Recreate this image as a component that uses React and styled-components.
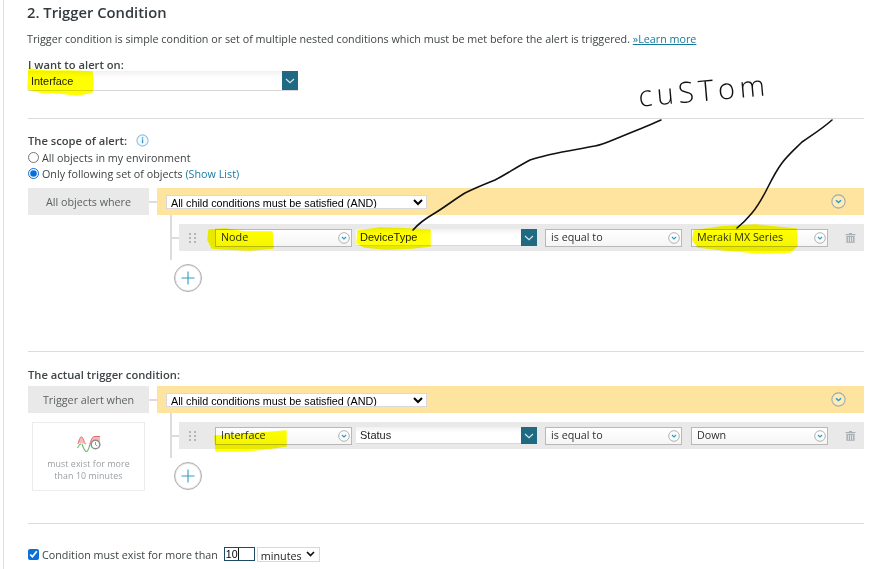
import React from "react";
import styled, { createGlobalStyle } from "styled-components";

const GlobalStyle = createGlobalStyle`
  html, body {
    margin: 0;
    padding: 0;
    background: #fff;
    overflow: hidden;
  }
  * {
    box-sizing: border-box;
  }
`;

function ChevronCircle({ size = 14 }) {
  return (
    <svg width={size} height={size} viewBox="0 0 14 14">
      <circle cx="7" cy="7" r="6.2" fill="#fff" fillOpacity="0.25" stroke="#a3a8a8" strokeWidth="1" />
      <path d="M4.6 5.8 L7 8 L9.4 5.8" fill="none" stroke="#2f9cc4" strokeWidth="1.4" />
    </svg>
  );
}

function WhiteChevron() {
  return (
    <svg width="10" height="6" viewBox="0 0 10 6">
      <path d="M1 1 L5 4.6 L9 1" fill="none" stroke="#d5e6ec" strokeWidth="1.2" />
    </svg>
  );
}

function BlackChevron() {
  return (
    <svg width="9" height="6" viewBox="0 0 9 6">
      <path d="M1 1 L4.5 4.5 L8 1" fill="none" stroke="#111" strokeWidth="1.7" />
    </svg>
  );
}

function InfoIcon() {
  return (
    <svg width="13" height="13" viewBox="0 0 13 13">
      <circle cx="6.5" cy="6.5" r="5.6" fill="#f2f9fd" stroke="#8cc4e4" strokeWidth="1.1" />
      <rect x="5.9" y="5.4" width="1.3" height="3.8" fill="#3d8fc4" />
      <rect x="5.9" y="3.3" width="1.3" height="1.3" fill="#3d8fc4" />
    </svg>
  );
}

function TrashIcon() {
  return (
    <svg width="11" height="11" viewBox="0 0 11 11">
      <path d="M4 1 H7 V2 H10.4 V3.2 H0.6 V2 H4 Z" fill="#a8b0b3" />
      <path d="M1.4 4 H9.6 V10.8 H1.4 Z" fill="#a8b0b3" />
      <path d="M3.4 5 V9.8 M5.5 5 V9.8 M7.6 5 V9.8" stroke="#e9e9e9" strokeWidth="0.9" />
    </svg>
  );
}

function PlusIcon() {
  return (
    <svg width="14" height="14" viewBox="0 0 14 14">
      <path d="M7 0.5 V13.5 M0.5 7 H13.5" stroke="#2f9cc4" strokeWidth="1.1" />
    </svg>
  );
}

function GripIcon() {
  return (
    <svg width="7" height="10" viewBox="0 0 7 10">
      {[0, 4, 8].map((y) => (
        <g key={y} fill="#b5b5b5">
          <rect x="0" y={y} width="2" height="2" />
          <rect x="5" y={y} width="2" height="2" />
        </g>
      ))}
    </svg>
  );
}

function WaveIcon() {
  return (
    <svg width="24" height="18" viewBox="0 0 24 18">
      <path d="M1 8 C3 2 4 1 5.5 3 C7 5 7.5 9 9 9 L13 9 C14 5 15 1.500 18 1.500 L23 1.500 L23 9 L13 9 Z" fill="#f7b9b9" />
      <path d="M1 9 C2.500 3 4 0.500 5.500 2.500 C7 5 7.500 9 9 9" fill="none" stroke="#e2686c" strokeWidth="1" />
      <path d="M13 9 C14 5 15 1.500 18 1.500 L23 1.500" fill="none" stroke="#e2686c" strokeWidth="1" />
      <path d="M0.500 13 C2 10 3 9 4 9 M5 9 C6 12 7.500 16.500 9.500 16.500 C11.500 16.500 12 12 13 9" fill="none" stroke="#6cb86a" strokeWidth="1.100" />
      <circle cx="18.500" cy="9.500" r="4.300" fill="#fff" stroke="#8b8f92" strokeWidth="1.500" />
      <path d="M18.500 7 V9.800 L20.300 11" fill="none" stroke="#8b8f92" strokeWidth="0.900" />
    </svg>
  );
}

function Annotations() {
  return (
    <>
      <HighlightLayer viewBox="0 0 869 569" width="869" height="569">
        <path d="M29 69 L45 71 L70 71 L92 72 L93 84 L92 92 L78 95 L60 93 L40 92 L28 89 Z" />
        <path d="M209 230 L225 229 L245 232 L272 232 L273 248 L250 250 L225 249 L212 248 L208 240 Z" />
        <path d="M358 231 L380 228 L410 229 L430 230 L430 246 L412 248 L385 249 L365 247 L357 243 Z" />
        <path d="M694 231 L720 227 L755 225 L796 229 L797 246 L790 252 L760 253 L725 250 L698 247 L693 240 Z" />
        <path d="M215 436 L240 435 L262 433 L286 431 L286 446 L265 449 L240 451 L216 451 Z" />
      </HighlightLayer>
      <ScribbleLayer viewBox="0 0 869 569" width="869" height="569">
        <path d="M661 120 C650 125 640 129 625 135 C612 140 605 144 595 146 C575 150 550 153 530 160 C515 168 505 175 495 180 C485 184 475 188 465 193 C455 199 445 207 435 213 C428 217 420 222 413 230" />
        <path d="M832 120 C822 129 812 135 802 142 C795 149 788 155 782 163 C776 171 772 179 768 187 C764 195 758 206 752 213 C747 219 742 224 737 228" />
      </ScribbleLayer>
      <HandNote>cuSTom</HandNote>
    </>
  );
}

function Dropdown({ width, gap, children }) {
  return (
    <Select $width={width} $gap={gap}>
      <SelectText>{children}</SelectText>
      <ChevronCircle size={12} />
    </Select>
  );
}

function LookupField({ children }) {
  return (
    <Lookup>
      <LookupText>{children}</LookupText>
      <LookupButton>
        <WhiteChevron />
      </LookupButton>
    </Lookup>
  );
}

function ConditionRow({ source, field, value }) {
  return (
    <Tree>
      <Connector $width={7} />
      <Row>
        <Grip>
          <GripIcon />
        </Grip>
        <Dropdown width={137}>{source}</Dropdown>
        <LookupField>{field}</LookupField>
        <Dropdown width={137} gap={8}>is equal to</Dropdown>
        <Dropdown width={137} gap={9}>{value}</Dropdown>
        <Trash>
          <TrashIcon />
        </Trash>
      </Row>
    </Tree>
  );
}

function ConditionGroup({ label, side, source, field, value }) {
  return (
    <div>
      <GroupHead>
        <GroupLabel>{label}</GroupLabel>
        <Connector $width={8} />
        <GroupBar>
          <AndSelect defaultValue="and">
            <option value="and">All child conditions must be satisfied (AND)</option>
          </AndSelect>
          <BarToggle>
            <ChevronCircle size={15} />
          </BarToggle>
        </GroupBar>
      </GroupHead>
      <GroupBody>
        <Side>{side}</Side>
        <TreeColumn>
          <ConditionRow source={source} field={field} value={value} />
          <AddButton>
            <PlusIcon />
          </AddButton>
        </TreeColumn>
      </GroupBody>
    </div>
  );
}

export default function App() {
  return (
    <Page>
      <GlobalStyle />
      <Title>2. Trigger Condition</Title>
      <Description>
        Trigger condition is simple condition or set of multiple nested conditions which must be met before the alert is triggered. <Link $underline>»Learn more</Link>
      </Description>
      <FieldLabel>I want to alert on:</FieldLabel>
      <LookupWide>
        <LookupTextWide>Interface</LookupTextWide>
        <LookupButton>
          <WhiteChevron />
        </LookupButton>
      </LookupWide>
      <Divider $top={27} />
      <ScopeLabel>
        The scope of alert:
        <InfoIcon />
      </ScopeLabel>
      <RadioLine>
        <input type="radio" name="scope" />
        All objects in my environment
      </RadioLine>
      <RadioLine>
        <input type="radio" name="scope" defaultChecked />
        <span>
          Only following set of objects <Link>(Show List)</Link>
        </span>
      </RadioLine>
      <GroupSpacer $top={7}>
        <ConditionGroup label="All objects where" source="Node" field="DeviceType" value="Meraki MX Series" />
      </GroupSpacer>
      <Divider $top={59} />
      <TriggerLabel>The actual trigger condition:</TriggerLabel>
      <GroupSpacer $top={3}>
        <ConditionGroup
          label="Trigger alert when"
          source="Interface"
          field="Status"
          value="Down"
          side={
            <SustainCard>
              <WaveIcon />
              <SustainText>
                must exist for more
                <br />
                than 10 minutes
              </SustainText>
            </SustainCard>
          }
        />
      </GroupSpacer>
      <Divider $top={32} />
      <SustainLine>
        <input type="checkbox" defaultChecked />
        <span>Condition must exist for more than</span>
        <MinutesInput defaultValue="10" />
        <UnitField>
          <UnitSelect defaultValue="minutes">
            <option value="minutes">minutes</option>
          </UnitSelect>
          <UnitArrow>
            <BlackChevron />
          </UnitArrow>
        </UnitField>
      </SustainLine>
      <Annotations />
    </Page>
  );
}

const Page = styled.div`
  position: relative;
  width: 869px;
  height: 569px;
  overflow: hidden;
  margin-left: 3px;
  padding: 0 8px 0 24px;
  border-left: 1px solid #dedede;
  font-family: "Open Sans", sans-serif;
  font-size: 10.76px;
  color: #3f4446;
  background: #fff;
`;

const Title = styled.div`
  height: 25px;
  line-height: 25px;
  margin-left: -1px;
  font-size: 14.75px;
  font-weight: 600;
  color: #333b3f;
`;

const Description = styled.div`
  height: 20px;
  margin: 4px 0 0 -1px;
  line-height: 20px;
  white-space: nowrap;
`;

const Link = styled.span`
  color: #167a9e;
  text-decoration: ${(p) => (p.$underline ? "underline" : "none")};
`;

const FieldLabel = styled.div`
  height: 13px;
  margin-top: 9px;
  line-height: 13px;
  font-size: 11.2px;
  font-weight: 600;
`;

const Lookup = styled.div`
  display: flex;
  width: 181px;
  height: 17px;
  margin-left: 4px;
  background: linear-gradient(#f1f1f1, #fff 35%);
`;

const LookupWide = styled(Lookup)`
  width: 270px;
  height: 20px;
  margin-left: 0;
  border-bottom: 1px solid #d8d8d8;
`;

const LookupText = styled.div`
  flex: 1;
  padding-left: 4px;
  line-height: 17px;
  font-family: "Liberation Sans", sans-serif;
  font-size: 11px;
  color: #222;
  border-bottom: 1px solid #d8d8d8;
`;

const LookupTextWide = styled(LookupText)`
  padding-left: 3px;
  line-height: 20px;
  font-size: 10.9px;
  border-bottom: none;
`;

const LookupButton = styled.div`
  display: flex;
  align-items: center;
  justify-content: center;
  width: 16px;
  background: #1f6a82;
`;

const Divider = styled.div`
  height: 1px;
  margin-top: ${(p) => p.$top}px;
  background: #dcdcdc;
`;

const ScopeLabel = styled.div`
  display: flex;
  align-items: center;
  gap: 9px;
  height: 16px;
  margin-top: 13px;
  font-size: 11.2px;
  font-weight: 600;
`;

const RadioLine = styled.label`
  display: flex;
  align-items: center;
  gap: 3px;
  height: 16px;
  white-space: nowrap;

  input {
    width: 11px;
    height: 11px;
    margin: 0;
    accent-color: #0b6fd6;
  }

  &:first-of-type {
    margin-top: 1px;
  }
`;

const GroupSpacer = styled.div`
  margin-top: ${(p) => p.$top}px;
`;

const GroupHead = styled.div`
  display: flex;
  align-items: center;
  height: 27px;
`;

const GroupLabel = styled.div`
  display: flex;
  align-items: center;
  justify-content: center;
  width: 121px;
  height: 27px;
  background: #e9e9e9;
  color: #5c6163;
`;

const Connector = styled.div`
  flex: none;
  width: ${(p) => p.$width}px;
  height: 2px;
  background: #dcdcdc;
`;

const GroupBar = styled.div`
  display: flex;
  align-items: center;
  justify-content: space-between;
  flex: 1;
  height: 27px;
  padding: 0 18px 0 9px;
  background: #fee49e;
`;

const AndSelect = styled.select`
  width: 261px;
  height: 14px;
  padding: 0;
  border: 1px solid #d9d9d9;
  background: #fff;
  font-family: "Liberation Sans", sans-serif;
  font-size: 10.8px;
  color: #000;
`;

const BarToggle = styled.div`
  display: flex;
`;

const GroupBody = styled.div`
  display: flex;
`;

const Side = styled.div`
  flex: none;
  width: 142px;
`;

const TreeColumn = styled.div`
  flex: 1;
`;

const Tree = styled.div`
  display: flex;
  align-items: center;
  height: 45px;
  border-left: 2px solid #dcdcdc;
`;

const Row = styled.div`
  display: flex;
  align-items: center;
  flex: 1;
  height: 27px;
  background: #e9e9e9;
`;

const Grip = styled.div`
  display: flex;
  justify-content: center;
  width: 36px;
  padding-right: 10px;
`;

const Select = styled.div`
  display: flex;
  align-items: center;
  width: ${(p) => p.$width}px;
  height: 18px;
  margin-left: ${(p) => p.$gap || 0}px;
  padding: 0 1px 0 5px;
  border: 1px solid #b8b8b8;
  background: linear-gradient(#fff, #f5f5f5);
`;

const SelectText = styled.div`
  flex: 1;
  padding-bottom: 2px;
  line-height: 14px;
  color: #2c3032;
  white-space: nowrap;
`;

const Trash = styled.div`
  display: flex;
  margin-left: 17px;
`;

const AddButton = styled.div`
  display: flex;
  align-items: center;
  justify-content: center;
  width: 28px;
  height: 28px;
  margin: 4px 0 0 4px;
  border: 1px solid #adadad;
  border-radius: 50%;
  box-shadow: inset 0 0 0 1px #e4e4e4;
  background: #fff;
`;

const TriggerLabel = styled.div`
  height: 16px;
  margin-top: 15px;
  line-height: 16px;
  font-size: 11.2px;
  font-weight: 600;
`;

const SustainCard = styled.div`
  display: flex;
  flex-direction: column;
  align-items: center;
  width: 113px;
  height: 69px;
  margin: 9px 0 0 4px;
  padding-top: 12px;
  border: 1px solid #ececec;
`;

const SustainText = styled.div`
  margin-top: 5px;
  line-height: 12px;
  font-size: 8.8px;
  letter-spacing: 0.1px;
  color: #9a9ea3;
  text-align: center;
`;

const SustainLine = styled.label`
  display: flex;
  align-items: center;
  height: 16px;
  margin-top: 22px;
  white-space: nowrap;

  input[type="checkbox"] {
    width: 11px;
    height: 11px;
    margin: 0 3px 0 0;
    accent-color: #0b6fd6;
  }
`;

const MinutesInput = styled.input`
  width: 31px;
  height: 14px;
  margin-left: 6px;
  padding: 0 0 0 1px;
  border: 1px solid #1f4a66;
  border-radius: 0;
  outline: none;
  background: linear-gradient(#111, #111) no-repeat 13px 0 / 1px 100%;
  font-family: "Liberation Sans", sans-serif;
  font-size: 10.6px;
  color: #000;
`;

const UnitField = styled.div`
  position: relative;
  width: 63px;
  height: 15px;
  margin-left: 2px;
  border: 1px solid #d9d9d9;
  background: #fff;
`;

const UnitSelect = styled.select`
  display: block;
  appearance: none;
  width: 100%;
  height: 100%;
  padding: 0 0 0 3px;
  border: none;
  border-radius: 0;
  background: transparent;
  font-family: "Open Sans", sans-serif;
  font-size: 10.76px;
  color: #222;
`;

const UnitArrow = styled.div`
  position: absolute;
  top: 3px;
  right: 4px;
  display: flex;
  pointer-events: none;
`;

const HighlightLayer = styled.svg`
  position: absolute;
  top: 0;
  left: -4px;
  pointer-events: none;
  mix-blend-mode: multiply;

  path {
    fill: #ffff00;
    stroke: #ffff00;
    stroke-width: 1.5;
    stroke-linejoin: round;
  }
`;

const ScribbleLayer = styled.svg`
  position: absolute;
  top: 0;
  left: -4px;
  pointer-events: none;

  path {
    fill: none;
    stroke: #111;
    stroke-width: 1.6;
    stroke-linecap: round;
  }
`;

const HandNote = styled.div`
  position: absolute;
  top: 75px;
  left: 634px;
  font-family: "Open Sans", sans-serif;
  font-weight: 300;
  font-size: 29px;
  line-height: 30px;
  letter-spacing: 4.5px;
  color: #111;
  transform: rotate(-5deg);
`;
